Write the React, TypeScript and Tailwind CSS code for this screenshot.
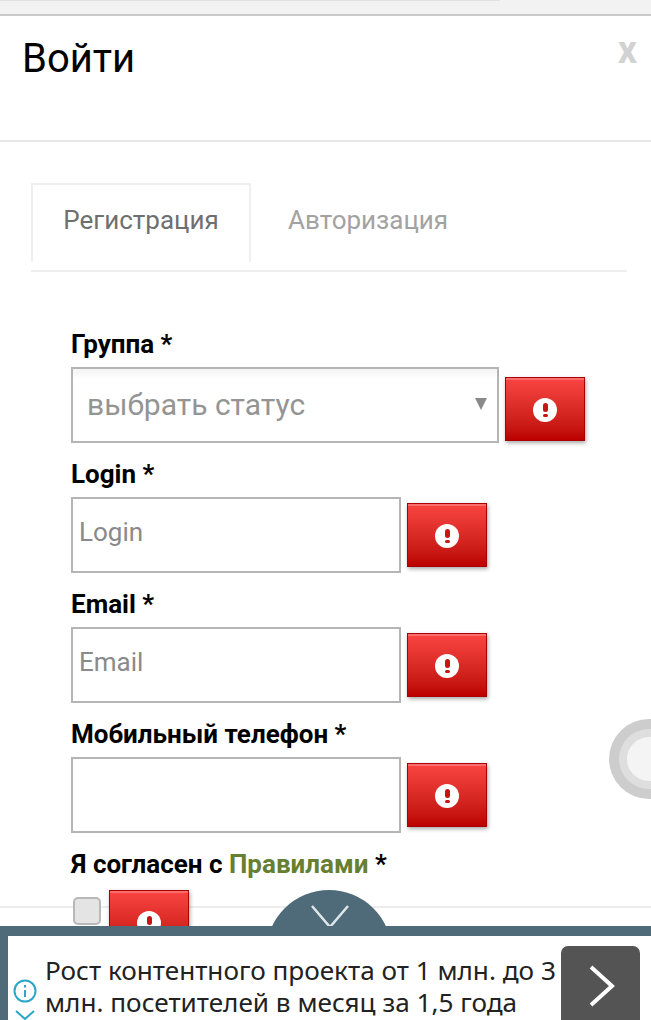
function AlertButton({ className = '' }: { className?: string }) {
  return (
    <button className={`flex h-16 w-20 shrink-0 items-center justify-center border border-[#a80000] bg-gradient-to-b from-[#fa4541] to-[#bb0000] pt-[1px] shadow-[inset_0_2px_0_rgba(255,255,255,0.22),1px_2px_4px_rgba(0,0,0,0.35)] ${className}`}>
      <span className="flex h-6 w-6 flex-col items-center justify-center gap-[2px] rounded-full bg-white">
        <span className="h-[9px] w-[5px] rounded-sm bg-[#c81414]"></span>
        <span className="h-[3px] w-[5px] rounded-sm bg-[#c81414]"></span>
      </span>
    </button>
  );
}

function Field({ label, placeholder }: { label: string; placeholder?: string }) {
  return (
    <div className="flex h-[130px] flex-col">
      <label className="h-[40px] text-[26px] leading-[34px] font-bold text-black">{label} *</label>
      <div className="flex items-center gap-[6px]">
        <div className="flex h-[76px] w-[330px] items-center border-2 border-[#b5b5b5] bg-white pb-[6px] pl-[6px] text-[26px] text-[#8a8a8a]">
          {placeholder}
        </div>
        <AlertButton />
      </div>
    </div>
  );
}

export default function App() {
  return (
    <div className="relative h-[1020px] w-[651px] overflow-hidden bg-white font-['Roboto',sans-serif]">
      {/* browser strip */}
      <div className="h-[16px] border-b-[2px] border-[#c9c9c9] bg-[#f2f2f2]">
        <div className="h-[1px] w-[500px] bg-[#e2e2e2]"></div>
      </div>

      {/* modal header */}
      <div className="flex h-[126px] items-start justify-between border-b-2 border-[#e8e8e8] pr-[14px] pl-[22px]">
        <h1 className="mt-[18px] text-[40px] leading-[50px] text-black">Войти</h1>
        <span className="mt-[12px] text-[38px] leading-[44px] font-bold text-[#d2d2d2]">x</span>
      </div>

      {/* tabs */}
      <div className="mt-[41px] ml-[31px] flex h-[89px] w-[596px] items-start border-b-2 border-[#eeeeee]">
        <div className="flex h-[79px] w-[220px] items-start justify-center border-x-2 border-t-2 border-[#efefef] pt-[17px] text-[26px] leading-[36px] text-[#6f6f6f]">
          Регистрация
        </div>
        <div className="pt-[19px] pl-[37px] text-[26px] leading-[36px] text-[#a2a2a2]">Авторизация</div>
      </div>

      {/* form */}
      <div className="mt-[55px] pl-[71px]">
        <div className="flex h-[130px] flex-col">
          <label className="h-[40px] text-[26px] leading-[34px] font-bold text-black">Группа *</label>
          <div className="flex items-start gap-[6px]">
            <div className="relative flex h-[76px] w-[428px] items-center border-2 border-[#b5b5b5] bg-gradient-to-b from-[#f4f4f4] to-white to-[15%] pb-[1px] pl-[14px] text-[30px] text-[#949494]">
              выбрать статус
              <span className="absolute top-[29px] right-[10px] h-0 w-0 border-x-[6px] border-t-[12px] border-x-transparent border-t-[#8a8a8a]"></span>
            </div>
            <AlertButton className="mt-[10px]" />
          </div>
        </div>
        <Field label="Login" placeholder="Login" />
        <Field label="Email" placeholder="Email" />
        <Field label="Мобильный телефон" />
        <div className="h-[43px] text-[26px] leading-[34px] font-bold text-black">
          Я согласен с <a className="text-[#66802f]">Правилами</a> *
        </div>
        <div className="relative z-10 flex h-[16px] items-start gap-[8px]">
          <span className="mt-[7px] ml-[2px] h-[28px] w-[28px] shrink-0 rounded-[5px] border-2 border-[#b8b8b8] bg-[#e4e4e4]"></span>
          <AlertButton />
        </div>
      </div>

      {/* modal footer line, passes behind the checkbox row */}
      <div className="h-[2px] bg-[#ececec]"></div>

      {/* floating grey circle */}
      <div className="absolute top-[719px] left-[609px] flex h-[80px] w-[80px] items-center justify-center rounded-full bg-[#cdcdcd]">
        <div className="flex h-[60px] w-[60px] items-center justify-center rounded-full bg-[#dedede]">
          <div className="h-[44px] w-[44px] rounded-full bg-[#f4f4f4]"></div>
        </div>
      </div>

      {/* ad bar */}
      <div className="absolute top-[890px] left-[266px] z-20 h-[126px] w-[126px] rounded-full bg-[#4f6a78]">
        <svg className="absolute top-[15px] left-[45px]" width="38" height="24" viewBox="0 0 38 24" fill="none" stroke="#dfe6ea" strokeWidth="2.5">
          <path d="M1 1l18 21L37 1" />
        </svg>
      </div>
      <div className="absolute top-[926px] right-0 left-0 z-20 h-[94px] bg-[#4f6a78] pt-[10px] pl-[8px]">
        <div className="relative h-[84px] bg-white font-['Noto_Sans',sans-serif] text-[26.15px] leading-[32px] text-[#222222]">
          <svg className="absolute top-[43px] left-[5px]" width="24" height="24" viewBox="0 0 24 24" fill="none" stroke="#2aa6c9" strokeWidth="2">
            <circle cx="12" cy="12" r="10.5" />
            <path d="M12 11v7M12 6v2.5" />
          </svg>
          <svg className="absolute top-[74px] left-[7px]" width="20" height="10" viewBox="0 0 20 10" fill="none" stroke="#2aa6c9" strokeWidth="2">
            <path d="M1 1l9 8 9-8" />
          </svg>
          <p className="absolute top-[18px] left-[37px] w-[520px] whitespace-nowrap">
            Рост контентного проекта от 1 млн. до 3
            <br />
            млн. посетителей в месяц за 1,5 года
          </p>
          <div className="absolute top-[10px] left-[553px] h-[74px] w-[79px] rounded-t-[7px] bg-[#545454]">
            <svg className="absolute top-[19px] left-[28px]" width="26" height="42" viewBox="0 0 26 42" fill="none" stroke="#ffffff" strokeWidth="4">
              <path d="M2 2l21 19L2 40" />
            </svg>
          </div>
        </div>
      </div>
    </div>
  );
}
